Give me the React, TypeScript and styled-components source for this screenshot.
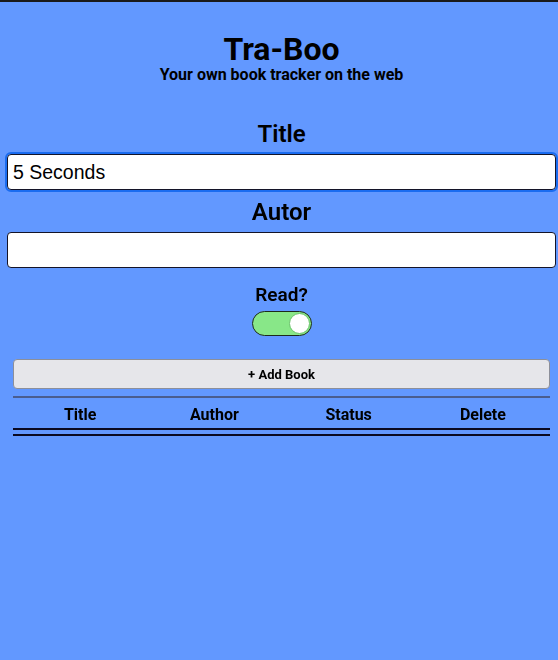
import React, { useState } from "react";
import styled, { createGlobalStyle } from "styled-components";

const Global = createGlobalStyle`
  html, body { margin: 0; padding: 0; }
  body {
    background: #6298ff;
    font-family: Roboto, "Noto Sans", sans-serif;
    color: #000;
    min-height: 660px;
    border-top: 2px solid #1a1a1a;
    box-sizing: border-box;
  }
`;

const Page = styled.div`
  display: flex;
  flex-direction: column;
  padding: 0 2px 0 7px;
`;

const Header = styled.header`
  display: flex;
  flex-direction: column;
  align-items: center;
  padding-top: 31px;
`;

const AppTitle = styled.h1`
  margin: 0;
  font-size: 32px;
  font-weight: 700;
  line-height: 33px;
`;

const Subtitle = styled.p`
  margin: 2px 0 0;
  font-size: 16px;
  font-weight: 700;
  line-height: 14px;
`;

const Form = styled.form`
  display: flex;
  flex-direction: column;
  align-items: center;
  margin-top: 38px;
`;

const Label = styled.label<{ $size?: number; $mt?: number }>`
  font-size: ${(p) => p.$size ?? 24}px;
  font-weight: 600;
  line-height: 28px;
  margin-top: ${(p) => p.$mt ?? 0}px;
`;

const TextInput = styled.input`
  box-sizing: border-box;
  width: 100%;
  height: 36px;
  margin-top: 6px;
  border: 1px solid #141428;
  border-radius: 4px;
  background: #fff;
  padding: 0 5px;
  font-family: "Liberation Sans", Arial, sans-serif;
  font-size: 19.5px;
  color: #000;
  outline: none;
  caret-color: #000;
  &:focus {
    outline: 2px solid #1a6cf0;
    outline-offset: 0;
  }
`;

const Toggle = styled.button<{ $on: boolean }>`
  position: relative;
  width: 60px;
  height: 25px;
  margin-top: 2px;
  border-radius: 13px;
  border: 1px solid #1c2a1c;
  background: ${(p) => (p.$on ? "#88e788" : "#ccc")};
  padding: 0;
  cursor: pointer;
`;

const Knob = styled.span<{ $on: boolean }>`
  position: absolute;
  top: 1px;
  left: ${(p) => (p.$on ? "36px" : "2px")};
  width: 21px;
  height: 21px;
  border-radius: 50%;
  background: #fff;
  box-sizing: border-box;
  border: 1px solid #6cc46c;
`;

const Section = styled.div`
  display: flex;
  flex-direction: column;
  padding: 0 6px;
  margin-top: 23px;
`;

const AddButton = styled.button`
  height: 30px;
  border: 1px solid #8c8f9a;
  border-radius: 4px;
  background: #e6e6ea;
  font-family: Roboto, sans-serif;
  font-weight: 700;
  font-size: 13px;
  color: #000;
  cursor: pointer;
`;

const Rule = styled.hr`
  margin: 7px 0 0;
  border: 0;
  border-top: 2px solid #4a5d8f;
`;

const Table = styled.table`
  width: 100%;
  border-collapse: collapse;
  font-size: 16px;
`;

const HeadCell = styled.th`
  width: 25%;
  font-weight: 700;
  text-align: center;
  padding: 8px 0 5px;
  line-height: 17px;
  border-bottom: 2px solid #0a0a22;
`;

const BottomLine = styled.div`
  margin-top: 4px;
  border-top: 2px solid #0a0a22;
`;

export default function App() {
  const [read, setRead] = useState(true);
  return (
    <>
      <Global />
      <Page>
        <Header>
          <AppTitle>Tra-Boo</AppTitle>
          <Subtitle>Your own book tracker on the web</Subtitle>
        </Header>
        <Form onSubmit={(e) => e.preventDefault()}>
          <Label htmlFor="title">Title</Label>
          <TextInput id="title" autoFocus defaultValue="5 Seconds" />
          <Label htmlFor="autor" $mt={8}>Autor</Label>
          <TextInput id="autor" />
          <Label $size={19} $mt={13}>Read?</Label>
          <Toggle type="button" $on={read} onClick={() => setRead(!read)}>
            <Knob $on={read} />
          </Toggle>
        </Form>
        <Section>
          <AddButton type="button">+ Add Book</AddButton>
          <Rule />
          <Table>
            <thead>
              <tr>
                <HeadCell>Title</HeadCell>
                <HeadCell>Author</HeadCell>
                <HeadCell>Status</HeadCell>
                <HeadCell>Delete</HeadCell>
              </tr>
            </thead>
          </Table>
          <BottomLine />
        </Section>
      </Page>
    </>
  );
}
